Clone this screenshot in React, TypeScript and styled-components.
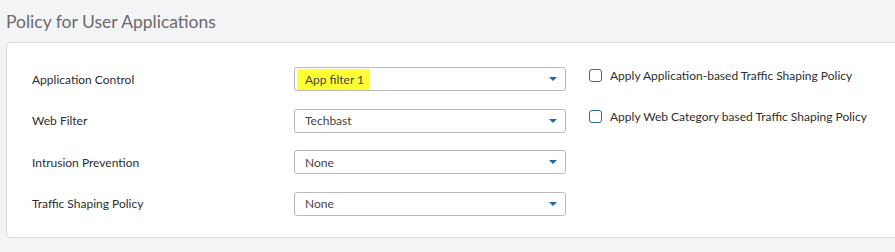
import React from "react";
import styled, { createGlobalStyle } from "styled-components";

const Global = createGlobalStyle`
  html, body { margin: 0; padding: 0; background: #f3f4f6; }
  body { font-family: Lato, "Liberation Sans", sans-serif; }
`;

const Page = styled.div`
  width: 895px;
  height: 252px;
  overflow: hidden;
  background: #f3f4f6;
  padding: 10px 0 0 6px;
  box-sizing: border-box;
`;

const Title = styled.h2`
  margin: 0 0 9px 0;
  font-weight: 400;
  font-size: 17.5px;
  line-height: 23px;
  color: #6b6b6b;
`;

const Panel = styled.div`
  background: #fff;
  border: 1px solid #dcdcdc;
  border-right: none;
  border-radius: 4px 0 0 4px;
  height: 196px;
  box-sizing: border-box;
  padding: 24px 0 0 25px;
  display: flex;
  align-items: flex-start;
  gap: 23px;
`;

const Rows = styled.div`
  display: grid;
  grid-template-columns: 262px 272px;
  row-gap: 17.5px;
  align-items: center;
  align-content: start;
`;

const Label = styled.div`
  font-size: 12px;
  color: #2e2e2e;
`;

const Select = styled.div`
  height: 24px;
  box-sizing: border-box;
  border: 1px solid #b9b9b9;
  border-radius: 3px;
  display: flex;
  align-items: center;
  padding: 0 8px 0 2px;
  font-size: 12px;
  color: #444;
`;

const Value = styled.span<{ $hl?: boolean }>`
  flex: 1;
  span {
    background: ${(p) => (p.$hl ? "#ffff33" : "transparent")};
    padding: 3px 6px 3px 8px;
  }
`;

const Caret = styled.span`
  width: 0;
  height: 0;
  border-left: 4px solid transparent;
  border-right: 4px solid transparent;
  border-top: 4px solid #1f6aa5;
`;

const Checks = styled.div`
  display: flex;
  flex-direction: column;
  gap: 26px;
  padding-top: 1px;
`;

const CheckRow = styled.label`
  display: flex;
  align-items: center;
  gap: 8px;
  font-size: 12px;
  color: #2e2e2e;
  height: 15px;
`;

const Box = styled.span`
  width: 13px;
  height: 13px;
  border: 1.5px solid #2f6a9c;
  border-radius: 3px;
  box-sizing: border-box;
  display: inline-block;
`;

const rows = [
  { label: "Application Control", value: "App filter 1", hl: true },
  { label: "Web Filter", value: "Techbast" },
  { label: "Intrusion Prevention", value: "None" },
  { label: "Traffic Shaping Policy", value: "None" },
];

export default function App() {
  return (
    <Page>
      <Global />
      <Title>Policy for User Applications</Title>
      <Panel>
        <Rows>
          {rows.map((r) => (
            <React.Fragment key={r.label}>
              <Label>{r.label}</Label>
              <Select>
                <Value $hl={r.hl}>
                  <span>{r.value}</span>
                </Value>
                <Caret />
              </Select>
            </React.Fragment>
          ))}
        </Rows>
        <Checks>
          <CheckRow>
            <Box />
            Apply Application-based Traffic Shaping Policy
          </CheckRow>
          <CheckRow>
            <Box />
            Apply Web Category based Traffic Shaping Policy
          </CheckRow>
        </Checks>
      </Panel>
    </Page>
  );
}
